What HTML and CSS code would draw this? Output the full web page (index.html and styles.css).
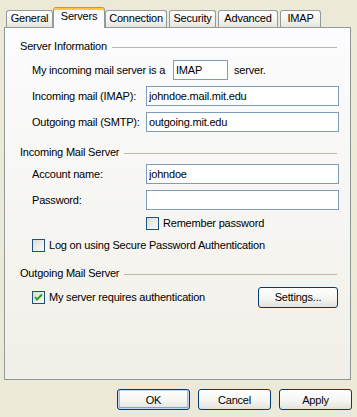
FILE: index.html
```html
<!DOCTYPE html>
<html lang="en">
<head>
    <meta charset="UTF-8">
    <title>Account Properties</title>
    <link rel="stylesheet" href="styles.css">
</head>
<body>
    <div class="dialog">
        <div class="tabs">
            <div class="tab t-general">General</div>
            <div class="tab t-servers active">Servers</div>
            <div class="tab t-connection">Connection</div>
            <div class="tab t-security">Security</div>
            <div class="tab t-advanced">Advanced</div>
            <div class="tab t-imap">IMAP</div>
        </div>

        <div class="page">
            <div class="group first"><span>Server Information</span><i class="rule"></i></div>
            <div class="row r1">
                <span class="lead">My incoming mail server is a</span>
                <input type="text" class="field short" value="IMAP">
                <span class="after">server.</span>
            </div>
            <div class="row r2">
                <span class="lbl">Incoming mail (IMAP):</span>
                <input type="text" class="field" value="johndoe.mail.mit.edu">
            </div>
            <div class="row r2">
                <span class="lbl">Outgoing mail (SMTP):</span>
                <input type="text" class="field" value="outgoing.mit.edu">
            </div>

            <div class="group g2"><span>Incoming Mail Server</span><i class="rule"></i></div>
            <div class="row r3">
                <span class="lbl">Account name:</span>
                <input type="text" class="field" value="johndoe">
            </div>
            <div class="row r2">
                <span class="lbl">Password:</span>
                <input type="password" class="field" value="">
            </div>
            <div class="row chk remember">
                <span class="box"></span>
                <span>Remember password</span>
            </div>
            <div class="row chk logon">
                <span class="box"></span>
                <span>Log on using Secure Password Authentication</span>
            </div>

            <div class="group g3"><span>Outgoing Mail Server</span><i class="rule"></i></div>
            <div class="row chk auth">
                <span class="box">
                    <svg width="11" height="11" viewBox="0 0 11 11">
                        <path d="M2 5 L4 7.5 L9 2.5" fill="none" stroke="#21a121" stroke-width="2"/>
                    </svg>
                </span>
                <span>My server requires authentication</span>
                <button class="btn settings">Settings...</button>
            </div>
        </div>

        <div class="buttons">
            <button class="btn default">OK</button>
            <button class="btn">Cancel</button>
            <button class="btn">Apply</button>
        </div>
    </div>
</body>
</html>
```

FILE: styles.css
```css
*{
    padding: 0px;
    margin: 0px;
    box-sizing: border-box;
}
body{
    background: #ece9d8;
    font-family: "Liberation Sans", Arial, sans-serif;
    font-size: 11px;
    letter-spacing: -0.2px;
    color: #000;
    width: 357px;
    height: 417px;
    overflow: hidden;
}
.dialog{
    padding: 7px 0 0 4px;
}

/* tabs */
.tabs{
    display: flex;
    align-items: flex-end;
    gap: 2px;
    margin-left: 2px;
    position: relative;
    z-index: 1;
}
.tab{
    height: 17px;
    border: 1px solid #919b9c;
    border-bottom: none;
    border-radius: 3px 3px 0 0;
    background: linear-gradient(#ffffff, #f3f2ee 60%, #e6e4dc);
    text-align: center;
    line-height: 15px;
    white-space: nowrap;
}
.t-general{ width: 47px; }
.t-servers{ width: 48px; }
.t-connection{ width: 62px; }
.t-security{ width: 47px; }
.t-advanced{ width: 60px; }
.t-imap{ width: 41px; }
.tab.active{
    height: 21px;
    width: 52px;
    margin: 0 -2px -1px -2px;
    background: #fcfcfe;
    border-top: 1px solid #e68b2c;
    box-shadow: inset 0 2px 0 #ffc83c;
    padding-top: 2px;
    line-height: 13px;
}

/* page */
.page{
    width: 347px;
    height: 353px;
    border: 1px solid #919b9c;
    border-right-color: #8e9696;
    border-bottom-color: #8e9696;
    background: linear-gradient(#fcfcfe, #f4f3ee 70%, #f1efe7);
    padding: 12px 11px 0 15px;
}
.group{
    display: flex;
    align-items: center;
    height: 13px;
    line-height: 13px;
}
.group .rule{
    flex: 1;
    height: 1px;
    background: #bcbaad;
    margin: 1px 2px 0 5px;
}
.g2{ margin-top: 14px; }
.g3{ margin-top: 15px; }

.row{
    display: flex;
    align-items: center;
    margin-left: 12px;
}
.r1{ margin-top: 7px; }
.r2{ margin-top: 6px; }
.r3{ margin-top: 5px; }
.lead{ width: 141px; }
.lbl{ width: 114px; }
.after{ margin-left: 6px; }

.field{
    flex: 1;
    height: 20px;
    border: 1px solid #7f9db9;
    background: #fff;
    font: inherit;
    letter-spacing: inherit;
    padding: 0 2px;
    outline: none;
}
.field.short{
    flex: none;
    width: 55px;
}

/* checkboxes */
.chk{
    height: 13px;
    line-height: 13px;
}
.box{
    width: 13px;
    height: 13px;
    border: 1px solid #1c5180;
    background: linear-gradient(135deg, #dcdcd7, #fbfbf9);
    margin-right: 4px;
    display: flex;
    align-items: center;
    justify-content: center;
}
.remember{
    margin-top: 7px;
    padding-left: 114px;
}
.logon{ margin-top: 9px; }
.auth{
    margin-top: 7px;
    height: 21px;
}

/* buttons */
.btn{
    width: 73px;
    height: 21px;
    border: 1px solid #003c74;
    border-radius: 3px;
    background: linear-gradient(#ffffff, #f4f4f0 60%, #e3e1d8);
    font: inherit;
    letter-spacing: inherit;
    color: #000;
}
.settings{
    width: 80px;
    margin-left: auto;
    margin-right: 1px;
}
.default{
    box-shadow: inset 0 0 0 1px #c4d9f7, inset 0 -2px 0 #7ea2e6, inset 2px 0 0 #9cbaed, inset -2px 0 0 #9cbaed;
}
.buttons{
    display: flex;
    justify-content: flex-end;
    gap: 8px;
    margin: 9px 5px 0 0;
}
```
